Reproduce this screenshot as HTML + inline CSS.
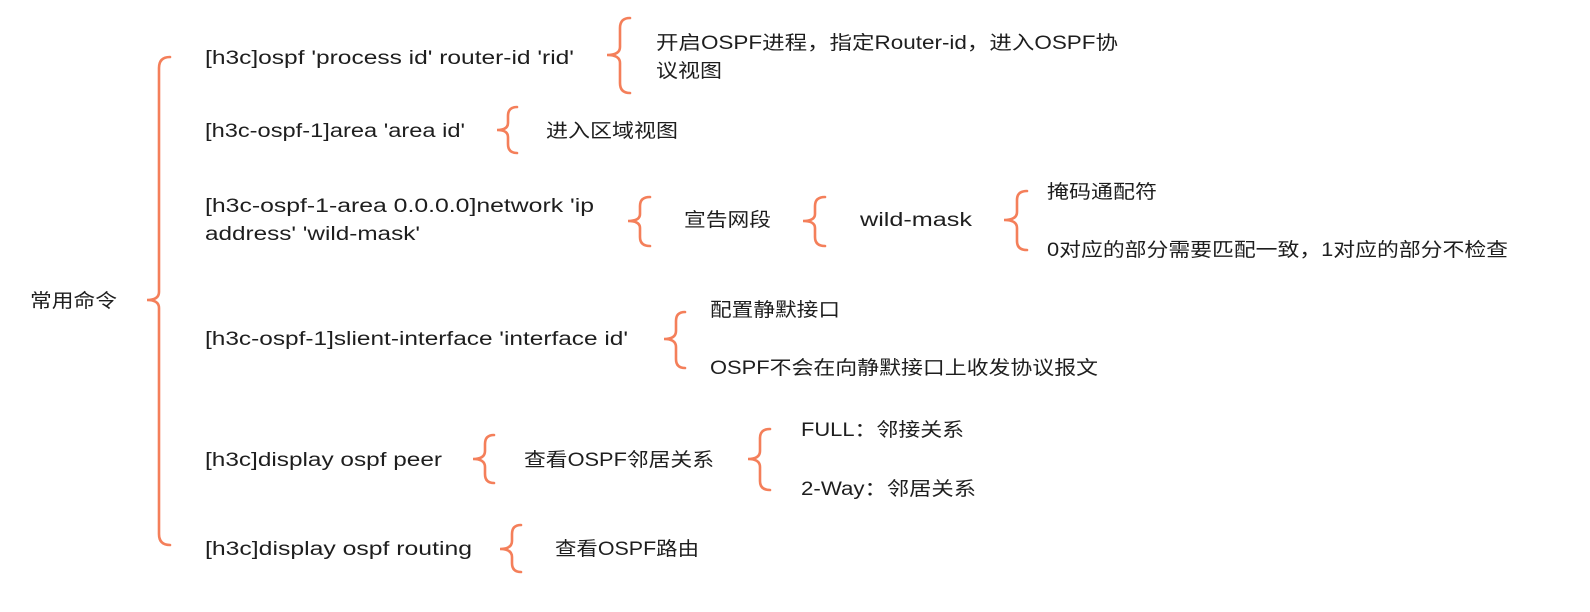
<!DOCTYPE html>
<html><head><meta charset="utf-8"><style>
html,body{margin:0;padding:0;background:#fff;}
svg{display:block}
text{font-family:"Liberation Sans","Noto Sans CJK SC",sans-serif;font-size:19px;fill:#1e1e1e;}
path{fill:none;stroke:#f47f5a;stroke-width:2.6;stroke-linecap:round}
</style></head><body>
<svg width="1590" height="612" viewBox="0 0 1590 612" xmlns="http://www.w3.org/2000/svg">
<path d="M170 57 Q159 57 159 68 L159 292 Q159 300 147 300 Q159 300 159 308 L159 534 Q159 545 170 545"/>
<path d="M630 18 Q620 18 620 28 L620 47 Q620 55 607 55 Q620 55 620 63 L620 83 Q620 93 630 93"/>
<path d="M517 107 Q508 107 508 116 L508 123 Q508 130 497 130 Q508 130 508 137 L508 144 Q508 153 517 153"/>
<path d="M650 197 Q640 197 640 206 L640 214 Q640 221 628 221 Q640 221 640 228 L640 237 Q640 246 650 246"/>
<path d="M825 197 Q815 197 815 206 L815 214 Q815 221 803 221 Q815 221 815 228 L815 237 Q815 246 825 246"/>
<path d="M1027 191 Q1017 191 1017 200 L1017 212 Q1017 220 1004 220 Q1017 220 1017 228 L1017 241 Q1017 250 1027 250"/>
<path d="M685 312 Q676 312 676 321 L676 331 Q676 339 664 339 Q676 339 676 347 L676 359 Q676 368 685 368"/>
<path d="M494 435 Q485 435 485 444 L485 451 Q485 459 473 459 Q485 459 485 467 L485 474 Q485 483 494 483"/>
<path d="M770 429 Q760 429 760 438 L760 451 Q760 459 748 459 Q760 459 760 467 L760 481 Q760 490 770 490"/>
<path d="M521 525 Q512 525 512 534 L512 541 Q512 549 500 549 Q512 549 512 557 L512 563 Q512 572 521 572"/>

<g>
<text x="30" y="307" textLength="87" lengthAdjust="spacingAndGlyphs">常用命令</text>
<text x="205" y="64" textLength="369" lengthAdjust="spacingAndGlyphs">[h3c]ospf 'process id' router-id 'rid'</text>
<text x="205" y="137" textLength="260" lengthAdjust="spacingAndGlyphs">[h3c-ospf-1]area 'area id'</text>
<text x="205" y="212" textLength="389" lengthAdjust="spacingAndGlyphs">[h3c-ospf-1-area 0.0.0.0]network 'ip</text>
<text x="205" y="240" textLength="215" lengthAdjust="spacingAndGlyphs">address' 'wild-mask'</text>
<text x="205" y="345" textLength="423" lengthAdjust="spacingAndGlyphs">[h3c-ospf-1]slient-interface 'interface id'</text>
<text x="205" y="466" textLength="237" lengthAdjust="spacingAndGlyphs">[h3c]display ospf peer</text>
<text x="205" y="555" textLength="267" lengthAdjust="spacingAndGlyphs">[h3c]display ospf routing</text>

<text x="656" y="49" textLength="462" lengthAdjust="spacingAndGlyphs">开启OSPF进程，指定Router-id，进入OSPF协</text>
<text x="656" y="77" textLength="66" lengthAdjust="spacingAndGlyphs">议视图</text>
<text x="546" y="137" textLength="132" lengthAdjust="spacingAndGlyphs">进入区域视图</text>
<text x="684" y="226" textLength="87" lengthAdjust="spacingAndGlyphs">宣告网段</text>
<text x="860" y="226" textLength="112" lengthAdjust="spacingAndGlyphs">wild-mask</text>
<text x="1047" y="198" textLength="110" lengthAdjust="spacingAndGlyphs">掩码通配符</text>
<text x="1047" y="256" textLength="461" lengthAdjust="spacingAndGlyphs">0对应的部分需要匹配一致，1对应的部分不检查</text>
<text x="710" y="316" textLength="130" lengthAdjust="spacingAndGlyphs">配置静默接口</text>
<text x="710" y="374" textLength="388" lengthAdjust="spacingAndGlyphs">OSPF不会在向静默接口上收发协议报文</text>
<text x="524" y="466" textLength="190" lengthAdjust="spacingAndGlyphs">查看OSPF邻居关系</text>
<text x="801" y="436" textLength="163" lengthAdjust="spacingAndGlyphs">FULL：邻接关系</text>
<text x="801" y="495" textLength="175" lengthAdjust="spacingAndGlyphs">2-Way：邻居关系</text>
<text x="555" y="555" textLength="144" lengthAdjust="spacingAndGlyphs">查看OSPF路由</text>
</g>
</svg>
</body></html>
